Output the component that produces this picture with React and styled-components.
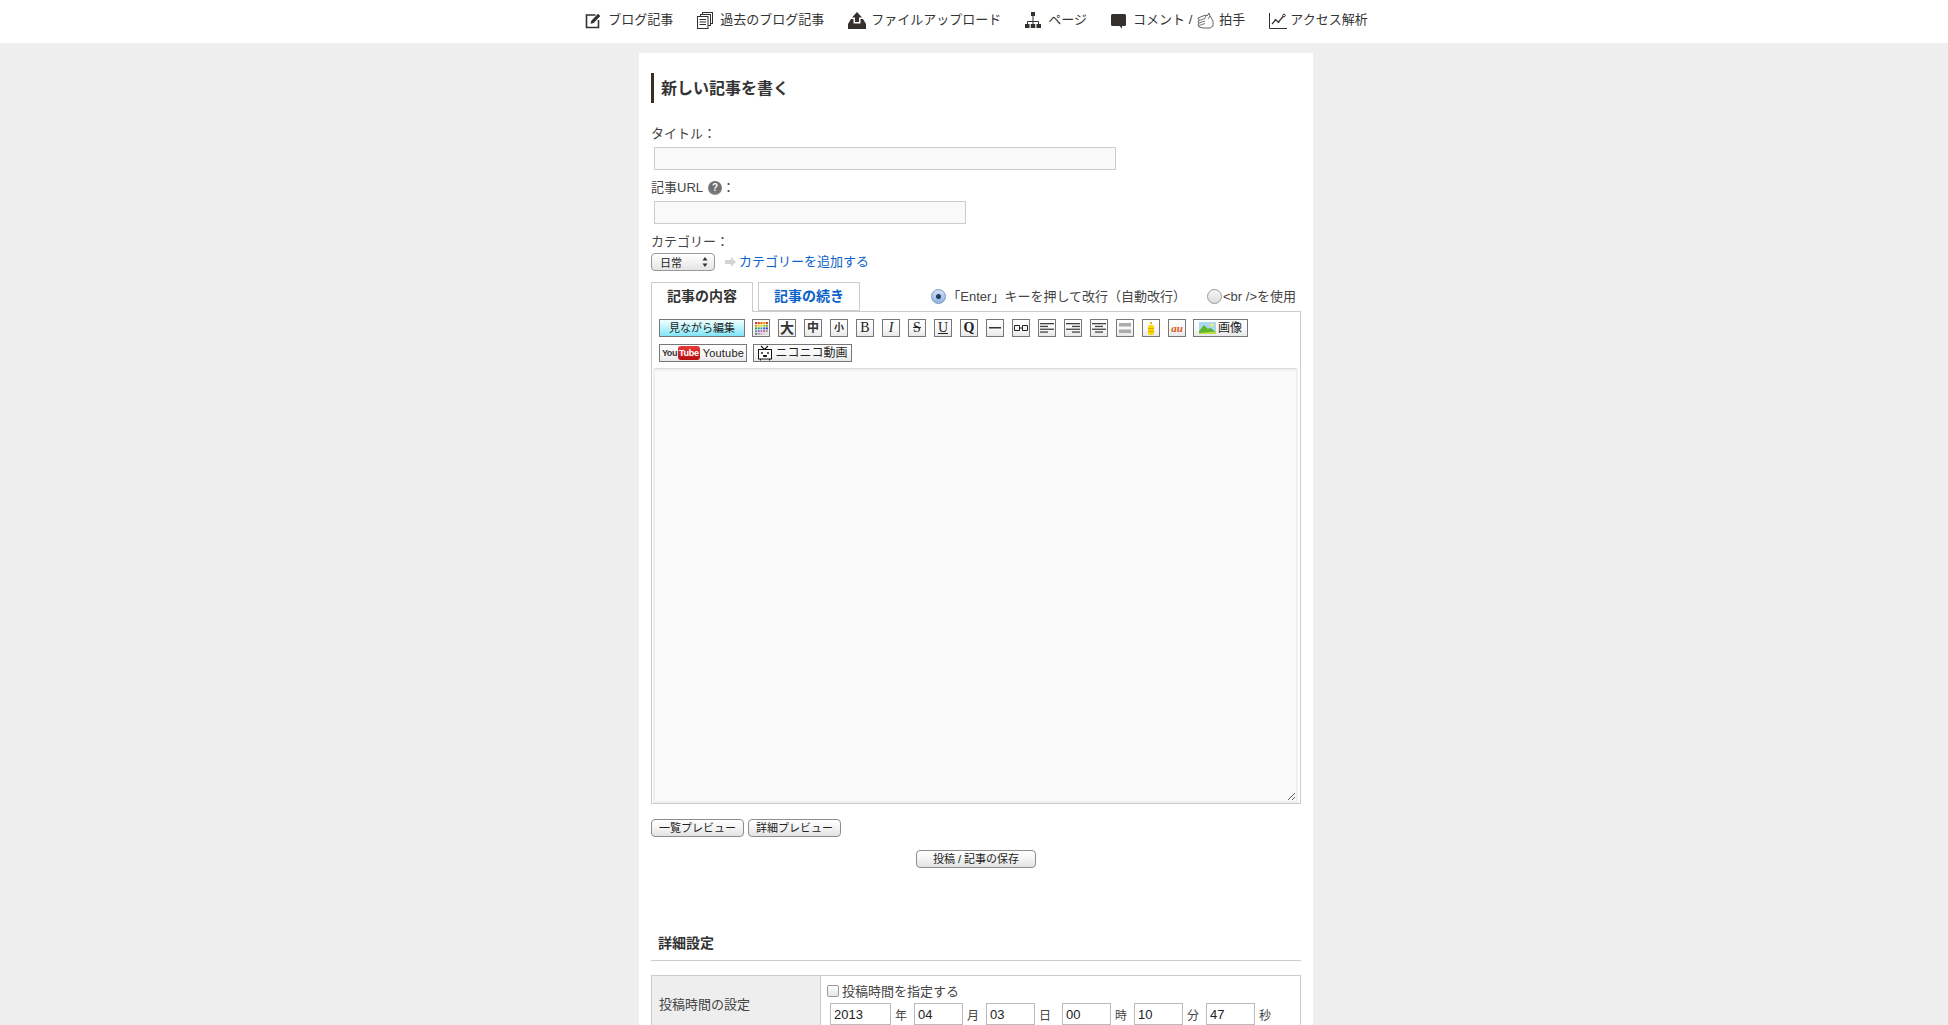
import React from 'react';
import styled, { createGlobalStyle } from 'styled-components';

const Global = createGlobalStyle`
  html, body { margin: 0; padding: 0; height: 100%; overflow: hidden; background: #eeeeee; }
  body { font-family: "Liberation Sans", "Noto Sans CJK JP", sans-serif; font-size: 13px; color: #333; }
  * { box-sizing: border-box; }
`;

const Page = styled.div`display: flex; flex-direction: column; align-items: center;`;

const TopBar = styled.nav`
  width: 100%; height: 43px; background: #fff; display: flex; justify-content: center;
  align-items: center; gap: 24px; padding-left: 5px; padding-bottom: 4px;
`;
const NavItem = styled.a`
  display: flex; align-items: center; gap: ${p => p.$gap || 7}px; color: #333; font-size: 13px;
  line-height: 18px; white-space: nowrap;
`;
const NavIcon = styled.svg`
  width: ${p => p.$w || 16}px; height: 18px; flex: none; color: #33302d; margin-right: ${p => p.$mr || 0}px;
`;

const Panel = styled.main`
  width: 674px; margin: 10px 0 0 4px; background: #fff; padding: 20px 12px 0; min-height: 1000px;
`;
const Heading = styled.h1`
  margin: 0; height: 30px; border-left: 3px solid #3a2f28; padding-left: 7px; font-size: 16px;
  font-weight: 700; line-height: 31px; color: #333;
`;
const Label = styled.div`
  display: flex; align-items: center; height: 18px; line-height: 18px; margin-top: ${p => p.$top}px;
  font-size: 13px; color: #444;
`;
const TextField = styled.input`
  display: block; width: ${p => p.$w}px; height: 23px; margin: 4px 0 0 3px; border: 1px solid #ccc;
  background: #f9f9f9; outline: none;
`;
const HelpDot = styled.span`
  width: 14px; height: 14px; margin-left: 5px; border-radius: 50%;
  background: radial-gradient(circle at 50% 35%, #666, #777 60%, #aaa);
  color: #fff; font-size: 10px; font-weight: 700; line-height: 14px; text-align: center;
`;
const CategoryRow = styled.div`display: flex; align-items: center; margin-top: 2px; height: 18px;`;
const SelectBox = styled.div`
  width: 64px; height: 18px; border: 1px solid #999; border-radius: 4px; display: flex; align-items: center;
  justify-content: space-between; padding: 0 6px 0 8px; font-size: 11px; color: #222;
  background: linear-gradient(#ffffff, #f2f2f2 50%, #e4e4e4);
`;
const SelectArrows = styled.svg`width: 6px; height: 10px;`;
const GoArrow = styled.svg`width: 11px; height: 10px; margin: 0 3px 0 10px;`;
const BlueLink = styled.a`color: #0b62c9; font-size: 13px; line-height: 16px;`;

const TabRow = styled.div`display: flex; align-items: flex-start; height: 29px; margin-top: 11px; position: relative; z-index: 1;`;
const Tab = styled.div`
  width: 102px; height: ${p => (p.$active ? 30 : 29)}px; margin-right: 5px; border: 1px solid #ccc;
  border-bottom: ${p => (p.$active ? 'none' : '1px solid #ccc')}; background: #fff; text-align: center;
  font-size: 14px; font-weight: 700; line-height: 27px; color: ${p => (p.$active ? '#333' : '#0b62c9')};
`;
const RadioGroup = styled.div`
  margin-left: auto; display: flex; align-items: center; gap: 21px; height: 27px; padding-right: 5px; font-size: 13px; color: #444;
`;
const RadioLabel = styled.label`display: flex; align-items: center; gap: 1px; white-space: nowrap;`;
const RadioDot = styled.span`
  width: 15px; height: 15px; margin-top: 2px; border-radius: 50%; border: 1px solid ${p => (p.$on ? '#7f97c0' : '#9a9a9a')};
  background: ${p => (p.$on ? 'linear-gradient(#cfe0f5, #8fb4e6)' : 'linear-gradient(#f6f6f6, #dcdcdc)')};
  display: flex; align-items: center; justify-content: center;
  &::after { content: ''; width: 5px; height: 5px; border-radius: 50%; background: ${p => (p.$on ? '#233a5c' : 'transparent')}; }
`;

const EditorBox = styled.section`border: 1px solid #ccc; padding: 0 2px 0 1px; height: 493px; display: flex; flex-direction: column;`;
const Toolbar = styled.div`border-bottom: 1px solid #ddd; margin: 0 1px; padding: 7px 5px 6px 5px; display: flex; flex-direction: column; gap: 7px;`;
const ToolRow = styled.div`display: flex; gap: 8px; height: 18px;`;
const Tool = styled.span`
  width: ${p => p.$w || 18}px; height: 18px; margin-right: ${p => p.$mr || 0}px; border: 1px solid #777;
  background: linear-gradient(#ffffff, #f6f6f6 60%, #e8e8e8); display: flex; align-items: center; justify-content: center; gap: 2px;
  color: ${p => p.$color || '#222'}; font-size: ${p => p.$size || 12}px; line-height: 16px; overflow: hidden; white-space: nowrap;
`;
const PrimaryTool = styled(Tool)`background: linear-gradient(#f2ffff, #b5f2fc 55%, #7fe4f7); color: #222;`;
const SerifGlyph = styled.span`
  font-family: "Liberation Serif", serif; font-size: 14px; font-weight: ${p => (p.$bold ? 700 : 400)};
  font-style: ${p => (p.$italic ? 'italic' : 'normal')}; text-decoration: ${p => p.$deco || 'none'};
`;
const BoldGlyph = styled.span`font-weight: ${p => p.$weight || 500}; font-size: ${p => p.$size}px; color: #333;`;
const AuGlyph = styled.span`color: #e2561a; font-weight: 700; font-style: italic; font-size: 11px; font-family: "Liberation Serif", serif;`;
const YouText = styled.span`font-weight: 700; font-size: 9px; color: #333; letter-spacing: -0.4px;`;
const TubeText = styled.span`
  background: linear-gradient(#e93a3a, #b80f0f); color: #fff; border-radius: 3px; font-weight: 700; font-size: 9px;
  padding: 0 1px; line-height: 14px; margin: 0 1px 0 -1px; letter-spacing: -0.3px;
`;
const YoutubeLabel = styled.span`font-size: 11px; letter-spacing: 0.2px;`;
const TextArea = styled.textarea`
  display: block; width: 100%; flex: 1; margin: 0; border: 2px solid #efefef; background: #f9f9f9; outline: none; resize: vertical;
`;

const PreviewRow = styled.div`display: flex; gap: 4px; margin-top: 15px;`;
const MacButton = styled.button`
  width: ${p => p.$w}px; height: 18px; padding: 0; border: 1px solid #8e8e8e; border-radius: 4px; font-family: inherit;
  font-size: 11px; line-height: 15px; color: #222; background: linear-gradient(#ffffff, #f4f4f4 50%, #e2e2e2);
`;
const SubmitRow = styled.div`display: flex; justify-content: center; margin-top: 13px;`;
const SubHeading = styled.h2`
  margin: 66px 0 14px; height: 27px; padding: 0 0 9px 7px; border-bottom: 1px solid #ccc; font-size: 14px; font-weight: 700;
  line-height: 18px; color: #333;
`;
const SettingsTable = styled.div`display: grid; grid-template-columns: 169px 1fr; border: 1px solid #ccc; height: 57px;`;
const SettingName = styled.div`background: #eeeeee; border-right: 1px solid #ccc; display: flex; align-items: center; padding-left: 7px; font-size: 13px; color: #444;`;
const SettingValue = styled.div`padding: 5px 0 0 6px; display: flex; flex-direction: column;`;
const CheckRow = styled.label`display: flex; align-items: center; gap: 3px; height: 18px; color: #444; font-size: 13px; margin-bottom: 4px;`;
const CheckBox = styled.span`width: 12px; height: 12px; margin-top: 1px; border: 1px solid #999; border-radius: 2px; background: linear-gradient(#fff, #e6e6e6);`;
const DateRow = styled.div`display: flex; align-items: center; margin-left: 3px;`;
const DateInput = styled.input`
  width: ${p => p.$w}px; height: 22px; border: 1px solid #bbb; padding: 0 3px; font-family: inherit; font-size: 13px; color: #222; background: #fff; outline: none;
`;
const DateUnit = styled.span`width: ${p => p.$w || 23}px; padding-left: 4px; font-size: 12px; color: #444;`;

const Pen = () => (
  <NavIcon viewBox="0 0 16 18">
    <path d="M10.500 4H1.500v12.500H13.500V9" fill="none" stroke="currentColor" strokeWidth="1.600" />
    <path d="M5.500 12.800l.8-3L13 2.800l2.400 2.300-6.800 7z" fill="currentColor" />
  </NavIcon>
);
const Docs = () => (
  <NavIcon viewBox="0 0 16 18">
    <g fill="#fff" stroke="currentColor" strokeWidth="1">
      <rect x="5.500" y="1.500" width="10" height="11" />
      <rect x="3.500" y="3.500" width="10" height="11" />
      <rect x="0.500" y="5.500" width="10.500" height="12" />
    </g>
    <path d="M2.500 8.500h6.500M2.500 11h6.500M2.500 13.500h6.500" stroke="currentColor" />
  </NavIcon>
);
const Upload = () => (
  <NavIcon $w={18} viewBox="0 0 18 18">
    <path d="M9 1l5 5.500h-3V11H7V6.500H4z" fill="currentColor" />
    <path d="M3 8h2.500v4.500h7V8H15l3 5v5H0v-5z" fill="currentColor" />
  </NavIcon>
);
const SiteMap = () => (
  <NavIcon viewBox="0 0 16 18">
    <path d="M8 5v5M2.500 13v-2.500h11V13M8 10.500V13" fill="none" stroke="currentColor" />
    <rect x="6" y="1" width="4" height="4" fill="currentColor" />
    <rect x="0" y="13" width="4.500" height="4" fill="currentColor" />
    <rect x="5.750" y="13" width="4.500" height="4" fill="currentColor" />
    <rect x="11.500" y="13" width="4.500" height="4" fill="currentColor" />
  </NavIcon>
);
const Bubble = () => (
  <NavIcon $w={15} $mr={2} viewBox="0 0 15 18">
    <path d="M1.500 3h12A1.500 1.500 0 0 1 15 4.500v9a1.500 1.500 0 0 1-1.500 1.500H11v2.500L8.500 15h-7A1.500 1.500 0 0 1 0 13.500v-9A1.500 1.500 0 0 1 1.500 3z" fill="currentColor" />
  </NavIcon>
);
const Clap = () => (
  <NavIcon $w={17} viewBox="0 0 17 18">
    <path d="M1 7l5-2 3-1 1 1 2-3 1 3 3 5v5l-3 2H6l-4-1-1-2 1-2-1-1 1-2z" fill="#fff" stroke="#555" strokeWidth="0.9" />
    <path d="M2 9.500l6-2M2 12l6-2M2 14.500l6-2M9 4.500l-1 3M13 5l-2 3" fill="none" stroke="#555" strokeWidth="0.8" />
  </NavIcon>
);
const Chart = () => (
  <NavIcon $w={18} viewBox="0 0 18 18">
    <path d="M.5 2v15.500H18" fill="none" stroke="currentColor" />
    <path d="M3 13l3.500-4 3 2 5-6" fill="none" stroke="currentColor" strokeWidth="1.200" />
    <circle cx="15" cy="4.500" r="1.300" fill="#fff" stroke="currentColor" />
    <circle cx="6.500" cy="9" r="1" fill="currentColor" />
    <circle cx="9.500" cy="11" r="1" fill="currentColor" />
  </NavIcon>
);

const navItems = [
  { icon: <Pen />, label: 'ブログ記事' },
  { icon: <Docs />, label: '過去のブログ記事' },
  { icon: <Upload />, label: 'ファイルアップロード', gap: 5 },
  { icon: <SiteMap />, label: 'ページ' },
  { icon: <Bubble />, label: 'コメント /', extra: <><Clap /><span>拍手</span></>, gap: 5 },
  { icon: <Chart />, label: 'アクセス解析', gap: 3 },
];

const paletteRows = [
  ['#d33', '#d33', '#e60', '#e90', '#c30'],
  ['#e90', '#ec0', '#dd0', '#9c3', '#693'],
  ['#3a3', '#396', '#39c', '#36c', '#339'],
  ['#69c', '#96c', '#c6c', '#c69', '#999'],
  ['#777', '#999', '#bbb', '#ccc', '#ddd'],
];
const Palette = () => (
  <svg width="13" height="13" viewBox="0 0 13 13">
    {paletteRows.flatMap((row, y) => row.map((c, x) => (
      <rect key={`${x}-${y}`} x={x * 2.700} y={y * 2.700} width="2" height="2" fill={c} />
    )))}
  </svg>
);
const Lines = ({ rows }) => (
  <svg width="14" height="13" viewBox="0 0 14 13">
    {rows.map(([x, w], i) => (
      <rect key={i} x={x} y={1 + i * 2.800} width={w} height="1.300" fill="#444" />
    ))}
  </svg>
);
const LinkGlyph = () => (
  <svg width="14" height="8" viewBox="0 0 14 8">
    <path d="M.5 1.500h5v5h-5zM8.500 1.500h5v5h-5zM5.500 4h3" fill="none" stroke="#222" />
  </svg>
);
const Rule = () => <svg width="12" height="2" viewBox="0 0 12 2"><rect width="12" height="1.500" fill="#333" /></svg>;
const Equal = () => (
  <svg width="12" height="10" viewBox="0 0 12 10"><rect width="12" height="3.500" fill="#aaa" /><rect y="6.500" width="12" height="3.500" fill="#aaa" /></svg>
);
const Phone = () => (
  <svg width="8" height="13" viewBox="0 0 8 13"><rect x="3" width="2" height="2" fill="#e6c000" /><rect x="1" y="3" width="6" height="10" rx="2" fill="#f7d800" /><path d="M1 6.500h6M1 9.500h6" stroke="#e8a800" /></svg>
);
const Landscape = () => (
  <svg width="17" height="12" viewBox="0 0 17 12">
    <rect width="17" height="12" fill="#a8d8f4" />
    <circle cx="13" cy="3" r="1.800" fill="#fbe86b" />
    <path d="M0 9l5-6 4 4 2-1.500L17 10v2H0z" fill="#5fb52f" />
    <path d="M0 11l17-1.500V12H0z" fill="#b9e04a" />
  </svg>
);
const TvGlyph = () => (
  <svg width="16" height="16" viewBox="0 0 16 16">
    <path d="M4 1l3.500 3.500L11 1" fill="none" stroke="#111" strokeWidth="1.100" />
    <rect x="1.500" y="4.500" width="13" height="9.500" fill="#fff" stroke="#111" />
    <circle cx="5" cy="8" r="0.900" fill="#111" />
    <circle cx="11" cy="8" r="0.900" fill="#111" />
    <path d="M6.500 10.500h3v1h-3zM3.500 14v1.500M12.500 14v1.500" stroke="#111" />
  </svg>
);

const dateParts = [
  { v: '2013', u: '年', w: 61 },
  { v: '04', u: '月', w: 49 },
  { v: '03', u: '日', w: 49, uw: 27 },
  { v: '00', u: '時', w: 49, uw: 23 },
  { v: '10', u: '分', w: 49 },
  { v: '47', u: '秒', w: 49 },
];

export default function App() {
  return (
    <Page>
      <Global />
      <TopBar>
        {navItems.map(n => (
          <NavItem key={n.label} $gap={n.gap}>
            {n.icon}
            <span>{n.label}</span>
            {n.extra}
          </NavItem>
        ))}
      </TopBar>
      <Panel>
        <Heading>新しい記事を書く</Heading>
        <Label $top={22}>タイトル：</Label>
        <TextField $w={462} />
        <Label $top={9}>記事URL<HelpDot>?</HelpDot>：</Label>
        <TextField $w={312} />
        <Label $top={9}>カテゴリー：</Label>
        <CategoryRow>
          <SelectBox>
            <span>日常</span>
            <SelectArrows viewBox="0 0 6 10"><path d="M3 0l2.500 3.500h-5zM3 10L.5 6.500h5z" fill="#333" /></SelectArrows>
          </SelectBox>
          <GoArrow viewBox="0 0 11 10"><path d="M0 3h6V0l5 5-5 5V7H0z" fill="#d4d4d4" /></GoArrow>
          <BlueLink>カテゴリーを追加する</BlueLink>
        </CategoryRow>
        <TabRow>
          <Tab $active>記事の内容</Tab>
          <Tab>記事の続き</Tab>
          <RadioGroup>
            <RadioLabel><RadioDot $on />「Enter」キーを押して改行（自動改行）</RadioLabel>
            <RadioLabel><RadioDot />&lt;br /&gt;を使用</RadioLabel>
          </RadioGroup>
        </TabRow>
        <EditorBox>
          <Toolbar>
            <ToolRow>
              <PrimaryTool $w={86} $mr={-1} $size={11}>見ながら編集</PrimaryTool>
              <Tool><Palette /></Tool>
              <Tool><BoldGlyph $size={14} $weight={700}>大</BoldGlyph></Tool>
              <Tool><BoldGlyph $size={12} $weight={700}>中</BoldGlyph></Tool>
              <Tool><BoldGlyph $size={10} $weight={700}>小</BoldGlyph></Tool>
              <Tool><SerifGlyph>B</SerifGlyph></Tool>
              <Tool><SerifGlyph $italic>I</SerifGlyph></Tool>
              <Tool><SerifGlyph $deco="line-through">S</SerifGlyph></Tool>
              <Tool><SerifGlyph $deco="underline">U</SerifGlyph></Tool>
              <Tool><SerifGlyph $bold>Q</SerifGlyph></Tool>
              <Tool><Rule /></Tool>
              <Tool><LinkGlyph /></Tool>
              <Tool><Lines rows={[[0, 14], [0, 8], [0, 14], [0, 8]]} /></Tool>
              <Tool><Lines rows={[[0, 14], [6, 8], [0, 14], [6, 8]]} /></Tool>
              <Tool><Lines rows={[[0, 14], [3, 8], [0, 14], [3, 8]]} /></Tool>
              <Tool><Equal /></Tool>
              <Tool><Phone /></Tool>
              <Tool $mr={-1}><AuGlyph>au</AuGlyph></Tool>
              <Tool $w={55}><Landscape /><span>画像</span></Tool>
            </ToolRow>
            <ToolRow>
              <Tool $w={88} $mr={-2}><YouText>You</YouText><TubeText>Tube</TubeText><YoutubeLabel>Youtube</YoutubeLabel></Tool>
              <Tool $w={99}><TvGlyph /><span>ニコニコ動画</span></Tool>
            </ToolRow>
          </Toolbar>
          <TextArea />
        </EditorBox>
        <PreviewRow>
          <MacButton $w={93}>一覧プレビュー</MacButton>
          <MacButton $w={93}>詳細プレビュー</MacButton>
        </PreviewRow>
        <SubmitRow>
          <MacButton $w={120}>投稿 / 記事の保存</MacButton>
        </SubmitRow>
        <SubHeading>詳細設定</SubHeading>
        <SettingsTable>
          <SettingName>投稿時間の設定</SettingName>
          <SettingValue>
            <CheckRow><CheckBox />投稿時間を指定する</CheckRow>
            <DateRow>
              {dateParts.map(d => (
                <React.Fragment key={d.u}>
                  <DateInput $w={d.w} defaultValue={d.v} readOnly />
                  <DateUnit $w={d.uw}>{d.u}</DateUnit>
                </React.Fragment>
              ))}
            </DateRow>
          </SettingValue>
        </SettingsTable>
      </Panel>
    </Page>
  );
}
